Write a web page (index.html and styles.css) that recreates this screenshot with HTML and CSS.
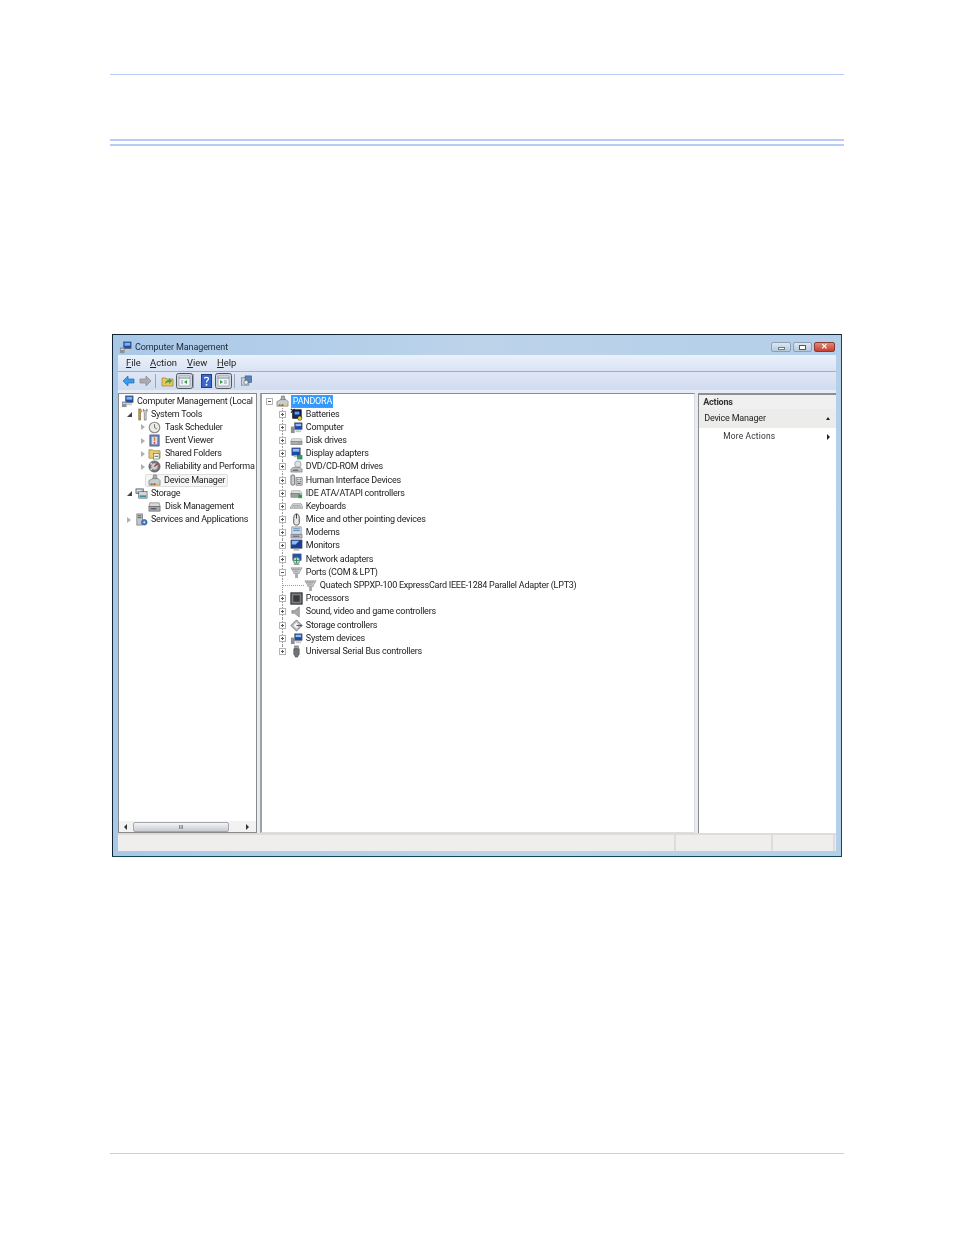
FILE: index.html
```html
<!DOCTYPE html>
<html lang="en">
<head>
<meta charset="utf-8">
<title>Computer Management</title>
<link rel="stylesheet" href="styles.css">
</head>
<body>
<svg class="defs" width="0" height="0" aria-hidden="true">
<defs>
<symbol id="i-plus" viewBox="0 0 7 7"><rect x=".5" y=".5" width="6" height="6" fill="#fff" stroke="#b4b4b4"/><path d="M2 3.500h3M3.500 2v3" stroke="#555"/></symbol>
<symbol id="i-minus" viewBox="0 0 7 7"><rect x=".5" y=".5" width="6" height="6" fill="#fff" stroke="#b4b4b4"/><path d="M2 3.500h3" stroke="#555"/></symbol>
<symbol id="i-mgmt" viewBox="0 0 14 14"><rect x="5" y="1" width="8" height="7" fill="#1d4fb0" stroke="#555" stroke-width=".7"/><rect x="6" y="2" width="6" height="3" fill="#7fb2ee"/><rect x="1" y="7" width="5" height="6" fill="#8b8f96"/><path d="M7 9h5v2H6z" fill="#c5c8cc"/><path d="M2 9h3" stroke="#eee"/></symbol>
<symbol id="i-tools" viewBox="0 0 14 14"><path d="M4 1v12h2V6l1-3-1-2z" fill="#caa13c" stroke="#6a5520" stroke-width=".6"/><path d="M9 1v3l1 1v8h2V5l1-1V1l-1 2h-2z" fill="#d7dadc" stroke="#555" stroke-width=".6"/></symbol>
<symbol id="i-clock" viewBox="0 0 14 14"><circle cx="7" cy="7" r="5.700" fill="#ecebe3" stroke="#8a8a8a" stroke-width="1.200"/><path d="M7 3.500V7l2.500 1.500" stroke="#666" fill="none"/></symbol>
<symbol id="i-event" viewBox="0 0 14 14"><rect x="2" y="1" width="10" height="12" fill="#6c86b5" stroke="#3c4a70" stroke-width=".7"/><rect x="4" y="3" width="6" height="8" fill="#d8e0ef"/><path d="M7 3.500v4" stroke="#d8842a" stroke-width="1.600"/><circle cx="7" cy="9.500" r="1" fill="#d03020"/></symbol>
<symbol id="i-folder" viewBox="0 0 14 14"><path d="M1 3h4l1 1h7v8H1z" fill="#eacb70" stroke="#927a32" stroke-width=".7"/><rect x="6" y="7" width="6" height="6" fill="#f6f4ea" stroke="#556" stroke-width=".6"/><path d="M7 10h4" stroke="#2d7a3c"/></symbol>
<symbol id="i-gauge" viewBox="0 0 14 14"><circle cx="7" cy="7" r="6" fill="#74787d" stroke="#444" stroke-width=".7"/><circle cx="7" cy="7" r="3.400" fill="#c9cbd0"/><path d="M7 7l3-3" stroke="#c02a20" stroke-width="1.400"/><circle cx="3.400" cy="4" r="1" fill="#ddd"/><circle cx="3.400" cy="10" r="1" fill="#ddd"/></symbol>
<symbol id="i-dev" viewBox="0 0 14 14"><path d="M6 1h3l1 5H5z" fill="#a9adb3" stroke="#666" stroke-width=".6"/><path d="M1 7l4-2h6l2 2v5H1z" fill="#c9ccd0" stroke="#666" stroke-width=".6"/><rect x="3" y="10" width="2" height="2" fill="#37a33c"/><rect x="6" y="10" width="2" height="2" fill="#d23c28"/><rect x="9" y="10" width="2" height="2" fill="#e8c82c"/></symbol>
<symbol id="i-store" viewBox="0 0 14 14"><rect x="1" y="2" width="8" height="5" fill="#a8bcc8" stroke="#556" stroke-width=".7"/><rect x="4" y="5" width="9" height="7" fill="#d3d6da" stroke="#556" stroke-width=".7"/><rect x="5" y="9" width="7" height="2" fill="#3a8f98"/><path d="M2 4h5" stroke="#fff"/></symbol>
<symbol id="i-disk" viewBox="0 0 14 14"><path d="M2 3h10l1 4H1z" fill="#d7d9dc" stroke="#666" stroke-width=".6"/><rect x="1" y="7" width="12" height="5" fill="#a5a8ad" stroke="#555" stroke-width=".6"/><path d="M3 9.500h6" stroke="#333"/></symbol>
<symbol id="i-svc" viewBox="0 0 14 14"><rect x="2" y="1" width="6" height="12" fill="#c3c7cc" stroke="#666" stroke-width=".7"/><path d="M3 3h4M3 5h4" stroke="#555"/><circle cx="10" cy="10" r="3" fill="#4a80c6" stroke="#2a4a80" stroke-width=".7"/><circle cx="10" cy="10" r="1" fill="#dfe8f5"/></symbol>
<symbol id="i-bat" viewBox="0 0 14 14"><rect x="3" y="2" width="9" height="9" fill="#18246e" stroke="#111"/><path d="M1 1l4 4M5 1 1 5" stroke="#222" stroke-width="1.200"/><rect x="5" y="4" width="5" height="3" fill="#5ea0ef"/><circle cx="10.500" cy="11" r="2.300" fill="#e8d020" stroke="#222" stroke-width=".6"/></symbol>
<symbol id="i-comp" viewBox="0 0 14 14"><rect x="5" y="2" width="8" height="7" fill="#1c4aa8" stroke="#555" stroke-width=".6"/><rect x="6" y="3" width="6" height="2.500" fill="#8fbcf0"/><rect x="1" y="6" width="4" height="7" fill="#8c9096"/><rect x="6" y="10" width="6" height="2" fill="#c4c7cb"/></symbol>
<symbol id="i-drive" viewBox="0 0 14 14"><path d="M2 5h10l1 3H1z" fill="#e1e3e5" stroke="#888" stroke-width=".5"/><rect x="1" y="8" width="12" height="3.500" fill="#a9acb1" stroke="#666" stroke-width=".5"/><rect x="9" y="9" width="2" height="1" fill="#4b4"/></symbol>
<symbol id="i-disp" viewBox="0 0 14 14"><rect x="2" y="1" width="9" height="8" fill="#1c4aa8" stroke="#555" stroke-width=".6"/><rect x="3" y="2" width="7" height="3" fill="#8fbcf0"/><rect x="4" y="9" width="5" height="2" fill="#bbb"/><rect x="8" y="9" width="5" height="4" fill="#2f9e60" stroke="#1d6d40" stroke-width=".5"/></symbol>
<symbol id="i-dvd" viewBox="0 0 14 14"><circle cx="8.500" cy="4.500" r="3.500" fill="#dbe1e6" stroke="#777" stroke-width=".6"/><path d="M3 8h8l2 2v3H1v-3z" fill="#bdc0c4" stroke="#666" stroke-width=".6"/><path d="M3 11h6" stroke="#444"/></symbol>
<symbol id="i-hid" viewBox="0 0 14 14"><rect x="1" y="1" width="4" height="11" rx="1.500" fill="#c8cbcf" stroke="#444" stroke-width=".7"/><rect x="6.500" y="4" width="6.500" height="8" fill="#dfe1e3" stroke="#555" stroke-width=".7"/><path d="M8 6h1M10.500 6h1M8 8h1M10.500 8h1M8 10h3.500" stroke="#333"/></symbol>
<symbol id="i-ide" viewBox="0 0 14 14"><path d="M2 4h9l2 3H1z" fill="#e1e3e5" stroke="#777" stroke-width=".5"/><rect x="1" y="7" width="9" height="4" fill="#9da1a6" stroke="#555" stroke-width=".5"/><rect x="9" y="8" width="4" height="4" fill="#2d9a44"/></symbol>
<symbol id="i-kbd" viewBox="0 0 14 14"><path d="M3 4h9l2 5H0z" fill="#d8dadc" stroke="#777" stroke-width=".6"/><path d="M3 6h8M2.500 7.500h9" stroke="#888" stroke-dasharray="1 .6"/></symbol>
<symbol id="i-mouse" viewBox="0 0 14 14"><path d="M4 6c0-3 1-5 3-5s3 2 3 5v4c0 2-1 3-3 3s-3-1-3-3z" fill="#e8e8e8" stroke="#333" stroke-width=".9"/><path d="M7 1v5" stroke="#333"/></symbol>
<symbol id="i-modem" viewBox="0 0 14 14"><rect x="2" y="1" width="10" height="8" fill="#cfe0ee" stroke="#667" stroke-width=".6"/><path d="M3.500 3h7M3.500 5h7" stroke="#5b7ea8"/><path d="M1 9h12v4H1z" fill="#b8bcc0" stroke="#667" stroke-width=".6"/><path d="M3 11h7" stroke="#555"/></symbol>
<symbol id="i-mon" viewBox="0 0 14 14"><rect x="1" y="1" width="12" height="9" fill="#1a3d9a" stroke="#555" stroke-width=".6"/><path d="M2 2h8L6 6H2z" fill="#8fbcf0"/><rect x="4" y="10.500" width="6" height="2" fill="#b5b8bc"/></symbol>
<symbol id="i-net" viewBox="0 0 14 14"><rect x="3" y="1" width="9" height="7" fill="#1e56b0" stroke="#556" stroke-width=".6"/><circle cx="7" cy="8" r="3.500" fill="#cfd8e0" stroke="#556" stroke-width=".6"/><path d="M7 5v6M4 8h6" stroke="#2f8f4c"/><rect x="4" y="11" width="6" height="2" fill="#9a9da2"/></symbol>
<symbol id="i-port" viewBox="0 0 14 14"><path d="M1 2h12l-3 5v1H4V7z" fill="#c7cacd" stroke="#888" stroke-width=".7"/><path d="M3 3.500h8M5 5.500h4" stroke="#666" stroke-dasharray="1 1"/><rect x="5.500" y="8" width="3" height="5" fill="#a6a9ad"/></symbol>
<symbol id="i-cpu" viewBox="0 0 14 14"><rect x="1" y="1" width="12" height="12" fill="#7d8085" stroke="#2a2a2a" stroke-width="1.200"/><rect x="3.500" y="3.500" width="7" height="7" fill="#3a3c40"/></symbol>
<symbol id="i-snd" viewBox="0 0 14 14"><path d="M2 6h3l5-4v11L5 9H2z" fill="#a7aaae" stroke="#6a6a6a" stroke-width=".6"/></symbol>
<symbol id="i-sto" viewBox="0 0 14 14"><path d="M7 1l6 6-6 6-6-6z" fill="#c0c3c7" stroke="#555" stroke-width=".8"/><path d="M7 4l3 3-3 3-3-3z" fill="#fff"/><path d="M7 7h6" stroke="#555" stroke-width="1.400"/></symbol>
<symbol id="i-usb" viewBox="0 0 14 14"><rect x="5" y="1" width="4" height="3" fill="#9da0a4" stroke="#555" stroke-width=".5"/><path d="M4 4h6v6l-1.500 2v1h-3v-1L4 10z" fill="#6f7276" stroke="#444" stroke-width=".5"/></symbol>
<symbol id="i-back" viewBox="0 0 13 12"><path d="M1 6l5-5v3h6v4H6v3z" fill="#3c9be8" stroke="#1d6ab0" stroke-width=".7"/></symbol>
<symbol id="i-fwd" viewBox="0 0 13 12"><path d="M12 6 7 1v3H1v4h6v3z" fill="#a9acb0" stroke="#84878b" stroke-width=".7"/></symbol>
<symbol id="i-up" viewBox="0 0 13 12"><path d="M1 3h4l1 1h6v7H1z" fill="#e7c760" stroke="#9b8030" stroke-width=".7"/><path d="M4 9c0-3 2-4 4-4V3l3 3-3 3V7c-2 0-3 1-4 2z" fill="#3aa63e"/></symbol>
<symbol id="i-tree" viewBox="0 0 17 16"><rect x=".5" y=".5" width="16" height="15" rx="2" fill="#cfd7e6" stroke="#50575f"/><rect x="3" y="3" width="11" height="10" fill="#f2f4f7" stroke="#7d848c" stroke-width=".6"/><path d="M3 5h11" stroke="#7d848c"/><path d="M5 7h2v4H5z" fill="#bcc6d4"/><path d="M8 9l3-2v4z" fill="#2fa245"/></symbol>
<symbol id="i-act" viewBox="0 0 17 16"><rect x=".5" y=".5" width="16" height="15" rx="2" fill="#cfd7e6" stroke="#50575f"/><rect x="3" y="3" width="11" height="10" fill="#f2f4f7" stroke="#7d848c" stroke-width=".6"/><path d="M3 5h11" stroke="#7d848c"/><path d="M9 7h3v4H9z" fill="#bcc6d4"/><path d="M8 9 5 7v4z" fill="#2fa245"/></symbol>
<symbol id="i-help" viewBox="0 0 11 14"><rect x=".5" y=".5" width="10" height="13" fill="#3a68c8" stroke="#25407a"/><circle cx="5.500" cy="10.700" r="1" fill="#fff"/><path d="M3.500 4.500C3.500 3 7.500 3 7.500 4.800 7.500 6.200 5.500 6.200 5.500 8.500" fill="none" stroke="#fff" stroke-width="1.200"/></symbol>
<symbol id="i-prop" viewBox="0 0 13 13"><rect x="1" y="3" width="8" height="8" fill="#ccd2da" stroke="#6d7580" stroke-width=".7"/><rect x="5" y="1" width="7" height="7" fill="#5b83b8" stroke="#3d5a82" stroke-width=".7"/><circle cx="6" cy="8" r="2.300" fill="#e8ebef" stroke="#555" stroke-width=".6"/></symbol>
</defs>
</svg>

<div class="page">
  <div class="rule-top"></div>
  <div class="rule-double"></div>

  <div class="window">
    <div class="titlebar">
      <svg class="ico"><use href="#i-mgmt"/></svg>
      <span class="title-text">Computer Management</span>
      <div class="caption">
        <span class="cap cap-min"><i></i></span>
        <span class="cap cap-max"><i></i></span>
        <span class="cap cap-close">✕</span>
      </div>
    </div>
    <div class="menubar">
      <span class="m-file"><u>F</u>ile</span><span class="m-action"><u>A</u>ction</span><span class="m-view"><u>V</u>iew</span><span class="m-help"><u>H</u>elp</span>
    </div>
    <div class="toolbar">
      <svg class="tb-arrow tb-back"><use href="#i-back"/></svg>
      <svg class="tb-arrow tb-fwd"><use href="#i-fwd"/></svg>
      <span class="tb-sep"></span>
      <svg class="tb-arrow tb-up"><use href="#i-up"/></svg>
      <svg class="tb-toggle"><use href="#i-tree"/></svg>
      <span class="tb-sep tb-sep2"></span>
      <svg class="tb-help"><use href="#i-help"/></svg>
      <svg class="tb-toggle"><use href="#i-act"/></svg>
      <span class="tb-sep"></span>
      <svg class="tb-arrow"><use href="#i-prop"/></svg>
    </div>

    <div class="panes">
      <div class="pane pane-left">
        <div class="tree tree-left">
          <div class="row l0"><svg class="ico"><use href="#i-mgmt"/></svg><span>Computer Management (Local</span></div>
          <div class="row l1"><b class="tri open"></b><svg class="ico-s"><use href="#i-tools"/></svg><span>System Tools</span></div>
          <div class="row l2"><b class="tri"></b><svg class="ico"><use href="#i-clock"/></svg><span>Task Scheduler</span></div>
          <div class="row l2"><b class="tri"></b><svg class="ico"><use href="#i-event"/></svg><span>Event Viewer</span></div>
          <div class="row l2"><b class="tri"></b><svg class="ico"><use href="#i-folder"/></svg><span>Shared Folders</span></div>
          <div class="row l2"><b class="tri"></b><svg class="ico"><use href="#i-gauge"/></svg><span>Reliability and Performa</span></div>
          <div class="row l2 current"><b class="tri none"></b><div class="sel"><svg class="ico"><use href="#i-dev"/></svg><span>Device Manager</span></div></div>
          <div class="row l1"><b class="tri open"></b><svg class="ico-s"><use href="#i-store"/></svg><span>Storage</span></div>
          <div class="row l2"><b class="tri none"></b><svg class="ico"><use href="#i-disk"/></svg><span>Disk Management</span></div>
          <div class="row l1"><b class="tri"></b><svg class="ico-s"><use href="#i-svc"/></svg><span>Services and Applications</span></div>
        </div>
        <div class="hscroll">
          <span class="sb-arrow sb-left"></span>
          <span class="sb-thumb">III</span>
          <span class="sb-arrow sb-right"></span>
        </div>
      </div>

      <div class="pane pane-mid">
        <div class="tree tree-mid">
          <div class="row m0"><svg class="exp"><use href="#i-minus"/></svg><svg class="ico"><use href="#i-dev"/></svg><span class="hl">PANDORA</span></div>
          <div class="row m1"><svg class="exp"><use href="#i-plus"/></svg><svg class="ico"><use href="#i-bat"/></svg><span>Batteries</span></div>
          <div class="row m1"><svg class="exp"><use href="#i-plus"/></svg><svg class="ico"><use href="#i-comp"/></svg><span>Computer</span></div>
          <div class="row m1"><svg class="exp"><use href="#i-plus"/></svg><svg class="ico"><use href="#i-drive"/></svg><span>Disk drives</span></div>
          <div class="row m1"><svg class="exp"><use href="#i-plus"/></svg><svg class="ico"><use href="#i-disp"/></svg><span>Display adapters</span></div>
          <div class="row m1"><svg class="exp"><use href="#i-plus"/></svg><svg class="ico"><use href="#i-dvd"/></svg><span>DVD/CD-ROM drives</span></div>
          <div class="row m1"><svg class="exp"><use href="#i-plus"/></svg><svg class="ico"><use href="#i-hid"/></svg><span>Human Interface Devices</span></div>
          <div class="row m1"><svg class="exp"><use href="#i-plus"/></svg><svg class="ico"><use href="#i-ide"/></svg><span>IDE ATA/ATAPI controllers</span></div>
          <div class="row m1"><svg class="exp"><use href="#i-plus"/></svg><svg class="ico"><use href="#i-kbd"/></svg><span>Keyboards</span></div>
          <div class="row m1"><svg class="exp"><use href="#i-plus"/></svg><svg class="ico"><use href="#i-mouse"/></svg><span>Mice and other pointing devices</span></div>
          <div class="row m1"><svg class="exp"><use href="#i-plus"/></svg><svg class="ico"><use href="#i-modem"/></svg><span>Modems</span></div>
          <div class="row m1"><svg class="exp"><use href="#i-plus"/></svg><svg class="ico"><use href="#i-mon"/></svg><span>Monitors</span></div>
          <div class="row m1"><svg class="exp"><use href="#i-plus"/></svg><svg class="ico"><use href="#i-net"/></svg><span>Network adapters</span></div>
          <div class="row m1"><svg class="exp"><use href="#i-minus"/></svg><svg class="ico"><use href="#i-port"/></svg><span>Ports (COM &amp; LPT)</span></div>
          <div class="row m2"><span class="elbow"></span><svg class="ico"><use href="#i-port"/></svg><span>Quatech SPPXP-100 ExpressCard IEEE-1284 Parallel Adapter (LPT3)</span></div>
          <div class="row m1"><svg class="exp"><use href="#i-plus"/></svg><svg class="ico"><use href="#i-cpu"/></svg><span>Processors</span></div>
          <div class="row m1"><svg class="exp"><use href="#i-plus"/></svg><svg class="ico"><use href="#i-snd"/></svg><span>Sound, video and game controllers</span></div>
          <div class="row m1"><svg class="exp"><use href="#i-plus"/></svg><svg class="ico"><use href="#i-sto"/></svg><span>Storage controllers</span></div>
          <div class="row m1"><svg class="exp"><use href="#i-plus"/></svg><svg class="ico"><use href="#i-comp"/></svg><span>System devices</span></div>
          <div class="row m1 last"><svg class="exp"><use href="#i-plus"/></svg><svg class="ico"><use href="#i-usb"/></svg><span>Universal Serial Bus controllers</span></div>
        </div>
      </div>

      <div class="pane pane-act">
        <div class="act-head">Actions</div>
        <div class="act-group"><span>Device Manager</span><b class="tri-up"></b></div>
        <div class="act-item"><span>More Actions</span><b class="tri-right"></b></div>
      </div>
    </div>

    <div class="statusbar">
      <span class="st st-main"></span>
      <span class="st st-b"></span>
      <span class="st st-c"></span>
    </div>
  </div>

  <div class="rule-bottom"></div>
</div>
</body>
</html>
```

FILE: styles.css
```css
* { box-sizing: border-box; }
html, body { margin: 0; padding: 0; background: #fff; }
body { height: 1235px; overflow: hidden; font-family: Roboto, "Open Sans", sans-serif; }
.defs { position: absolute; }
.page { padding: 74px 110px 0; }
.rule-top { height: 1px; background: #b8ccf5; }
.rule-double { height: 7px; margin-top: 64px; border-top: 2px solid #b8ccf5; border-bottom: 2px solid #b8ccf5; }

.window {
  width: 730px; height: 523px; margin: 188px 0 0 2px;
  display: flex; flex-direction: column;
  border: 1px solid #123; border-right-color: #0f4a55; border-bottom-color: #0f4a55;
  padding: 0 5px 5px;
  background: linear-gradient(90deg, #a9c8e8, #bcd3ea 50%, #b4cfea);
  font-size: 9px; color: #222; line-height: 13px; white-space: nowrap;
  filter: blur(.3px);
}
.titlebar { height: 20px; flex: none; display: flex; align-items: center; gap: 3px; margin-left: 1px; padding-top: 4px; }
.title-text { color: #1c2733; font-size: 9px; letter-spacing: -.1px; }
.caption { margin-left: auto; display: flex; gap: 2px; margin-top: 3px; align-self: flex-start; margin-right: 1px; }
.cap { height: 10px; border: 1px solid #8ea0b3; border-radius: 2px; background: linear-gradient(#dde7f1, #b6c9dc); display: flex; align-items: center; justify-content: center; }
.cap-min { width: 20px; }
.cap-min i { width: 7px; height: 3px; margin-top: 3px; border: 1px solid #6d7a88; background: #fff; }
.cap-max { width: 19px; }
.cap-max i { width: 7px; height: 5px; border: 1px solid #4d5a68; background: #fff; }
.cap-close { width: 21px; border-color: #8a3a32; background: linear-gradient(#e08a78, #c8402e); color: #fff; font-size: 8px; font-weight: 700; line-height: 8px; }

.menubar { height: 17px; flex: none; display: flex; align-items: center; padding: 0 0 2px 8px; background: linear-gradient(#eaf1fa, #d9e3f4); border-bottom: 1px solid #a3adbc; color: #222; font-size: 9.400px; }
.m-file { width: 24px; }
.m-action { width: 37px; }
.m-view { width: 30px; }

.toolbar { height: 18px; flex: none; display: flex; align-items: center; padding: 0 0 1px 4px; background: linear-gradient(#dfe6f5, #d2dcf0); }
.tb-arrow { width: 13px; height: 12px; flex: none; }
.tb-back { margin-right: 4px; }
.tb-fwd { margin-right: 3px; }
.tb-up { margin-right: 2px; }
.tb-help { width: 11px; height: 14px; flex: none; margin-right: 3px; }
.tb-toggle { width: 17px; height: 16px; flex: none; }
.tb-sep { width: 1px; height: 14px; flex: none; background: #9aa5b5; margin: 0 5px 0 2px; }
.tb-fwd + .tb-sep { margin-left: 0; }
.tb-sep2 { margin: 0 7px 0 0; }

.panes { flex: 1; min-height: 0; display: flex; background: #e6ecf6; padding-top: 3px; border-bottom: 2px solid #dcdcdc; }
.pane { background: #fff; display: flex; flex-direction: column; min-width: 0; overflow: hidden; }
.pane-left { width: 139px; border: 1px solid #8a8a8a; }
.pane-mid { width: 436px; margin-left: 3px; border-top: 1px solid #8a8a8a; border-left: 2px solid #a0a0a0; border-bottom: 1px solid #ddd; border-right: 1px solid #ddd; }
.pane-act { width: 138px; margin-left: 3px; border-top: 2px solid #8f8f8f; border-left: 1px solid #8a8a8a; }

.tree { flex: 1; min-height: 0; padding-top: .5px; letter-spacing: -.24px; }
.row { height: 13.180px; display: flex; align-items: center; position: relative; }
.ico, .ico-s { width: 13px; height: 13px; flex: none; }
.exp { width: 7px; height: 7px; flex: none; position: relative; z-index: 1; }

.l0 { padding-left: 2px; gap: 3px; }
.l1 { padding-left: 8px; }
.l2 { padding-left: 22px; }
.l1 .ico-s { margin: 0 3px 0 4px; }
.l2 .ico { margin: 0 4px 0 3px; }
.tri { width: 0; height: 0; flex: none; border-style: solid; border-width: 3.500px 0 3.500px 4px; border-color: transparent transparent transparent #b0b0b0; }
.tri.none { border-color: transparent; }
.tri.open { width: 4px; height: 4px; border-width: 0 0 5px 5px; border-color: transparent transparent #444 transparent; margin-right: -1px; }
.sel { display: flex; align-items: center; height: 13px; padding-right: 2px; border: 1px solid #dedede; border-radius: 2px; background: #f5f5f5; }
.sel .ico { margin: 0 3px 0 2px; }

.tree-mid { padding-left: 3px; }
.m0 { padding-left: 1px; }
.m0 .ico { margin: 0 2px 0 3px; }
.m1 { padding-left: 14px; }
.m1 .ico { margin: 0 3px 0 4px; }
.m2 .ico { margin-right: 3px; }
.m1::before, .m2::before { content: ""; position: absolute; left: 17px; top: 0; bottom: 0; border-left: 1px dotted #999; }
.m1.last::before { bottom: 50%; }
.elbow { width: 22px; height: 7px; flex: none; align-self: flex-start; margin: 0 0 0 17px; border-left: 1px dotted #999; border-bottom: 1px dotted #999; }
.hl { background: #3399ff; color: #fff; padding: 0 1px 0 2px; height: 13px; outline: 1px dotted #c98a3a; outline-offset: -1px; }

.hscroll { height: 11px; flex: none; display: flex; align-items: center; background: #f2f2f2; }
.sb-arrow { width: 0; height: 0; border-style: solid; border-width: 3px; border-color: transparent; }
.sb-left { border-right: 3px solid #333; border-left-width: 0; margin-left: 5px; }
.sb-right { border-left: 3px solid #333; border-right-width: 0; }
.sb-thumb { width: 96px; height: 10px; margin: 0 17px 0 6px; background: linear-gradient(#f3f4f6, #c9ccd1); border: 1px solid #a4a8ae; border-radius: 2px; font-size: 6px; line-height: 8px; text-align: center; color: #555; }

.act-head { height: 14px; background: #f0f0f0; padding: 1px 0 0 4px; font-weight: 700; color: #333; line-height: 13px; letter-spacing: -.2px; }
.act-group { height: 19px; display: flex; align-items: center; justify-content: space-between; padding: 0 6px 0 5px; background: #ececea; color: #222; font-size: 9px; letter-spacing: -.2px; }
.act-item { height: 17px; display: flex; align-items: center; justify-content: space-between; padding: 0 6px 0 24px; font-size: 8.400px; letter-spacing: .2px; color: #333; }
.tri-up { border-style: solid; border-width: 0 2.500px 3px; border-color: transparent transparent #222; }
.tri-right { border-style: solid; border-width: 3px 0 3px 3px; border-color: transparent transparent transparent #222; }

.statusbar { height: 16px; flex: none; display: flex; background: #f0eeed; }
.st { height: 100%; border-right: 2px solid #dcdcdc; }
.st-main { width: 558px; }
.st-b { width: 97px; }
.st-c { width: 62px; }

.rule-bottom { height: 1px; background: #cfcfcf; margin-top: 296px; }
```
